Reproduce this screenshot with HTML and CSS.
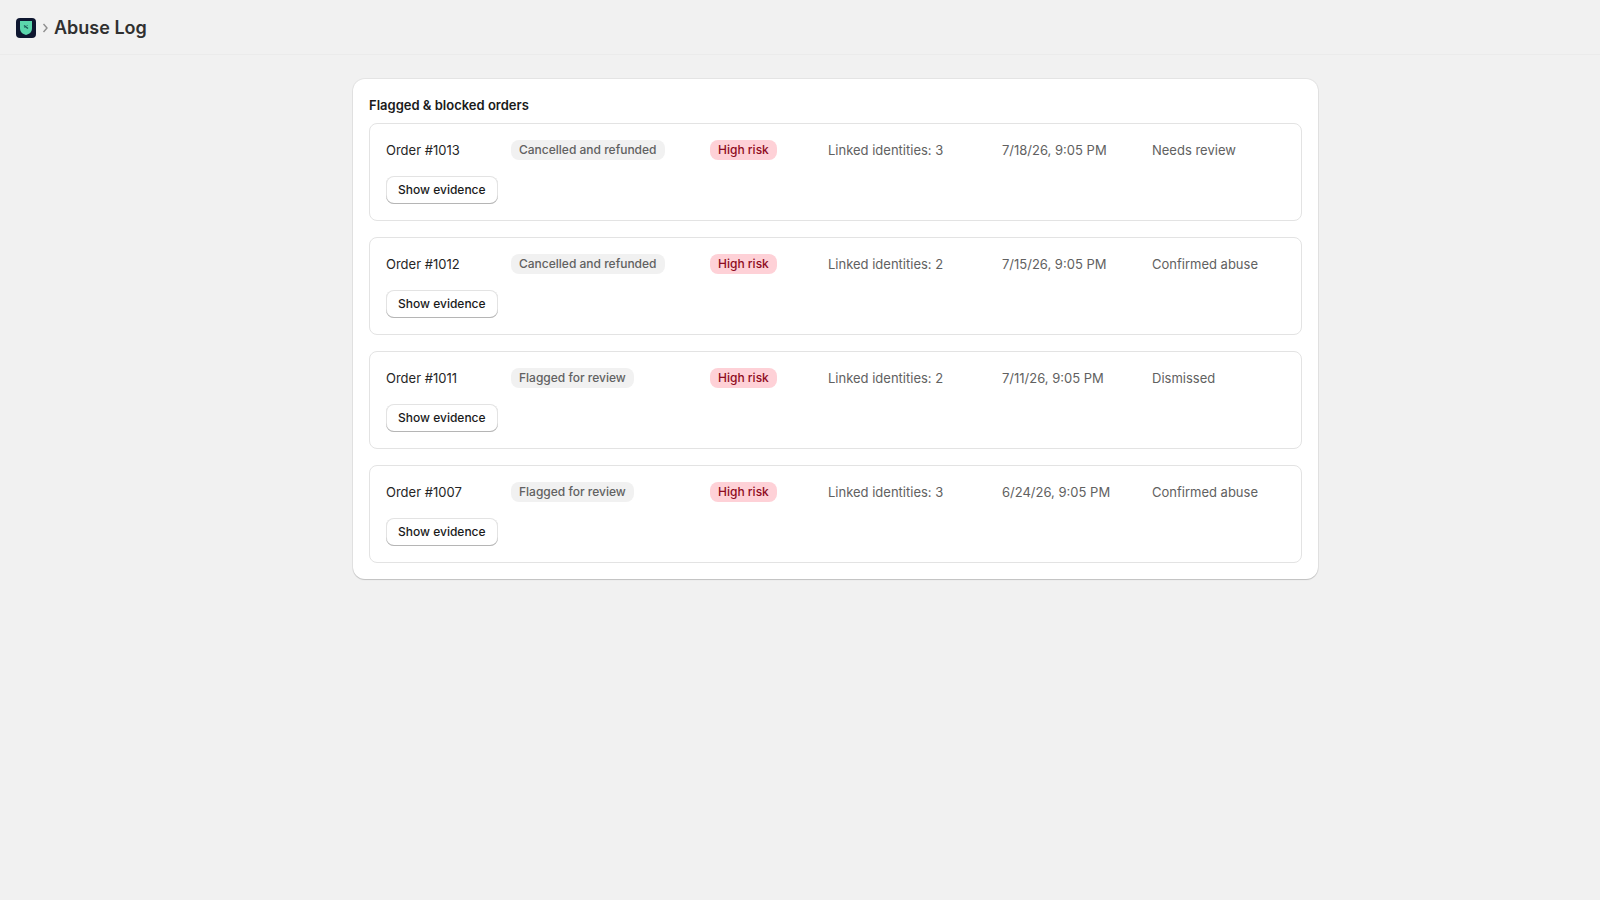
FILE: index.html
```html
<!DOCTYPE html>
<html lang="en">
<head>
<meta charset="utf-8">
<meta name="viewport" content="width=device-width, initial-scale=1">
<title>Abuse Log</title>
<link rel="stylesheet" href="styles.css">
</head>
<body>
<header class="topbar">
  <svg class="logo" viewBox="0 0 20 20" aria-hidden="true">
    <rect width="20" height="20" rx="4" fill="#0e1730"/>
    <path d="M4 3h12v7c0 4-2.500 6-6 7-3.500-1-6-3-6-7z" fill="#5bd6ac"/>
    <path d="M8 7.500l4 3" stroke="#1d5a58" stroke-width="1.500" fill="none"/>
    <path d="M8 9.500h1.500M10.500 7.500h1.500" stroke="#3a9580" stroke-width="1" fill="none"/>
  </svg>
  <svg class="chevron" viewBox="0 0 6 10" aria-hidden="true"><path d="M1.500 1L5 5 1.500 9" fill="none" stroke="#8f8f8f" stroke-width="1.400"/></svg>
  <h1 class="title">Abuse Log</h1>
</header>
<main class="page">
  <section class="card">
    <h2 class="card-title">Flagged &amp; blocked orders</h2>
    <div class="orders">
      <article class="order">
        <div class="fields">
          <span class="name">Order #1013</span>
          <span><span class="badge">Cancelled and refunded</span></span>
          <span><span class="badge critical">High risk</span></span>
          <span>Linked identities: 3</span>
          <span>7/18/26, 9:05 PM</span>
          <span>Needs review</span>
        </div>
        <button class="button" type="button">Show evidence</button>
      </article>
      <article class="order">
        <div class="fields">
          <span class="name">Order #1012</span>
          <span><span class="badge">Cancelled and refunded</span></span>
          <span><span class="badge critical">High risk</span></span>
          <span>Linked identities: 2</span>
          <span>7/15/26, 9:05 PM</span>
          <span>Confirmed abuse</span>
        </div>
        <button class="button" type="button">Show evidence</button>
      </article>
      <article class="order">
        <div class="fields">
          <span class="name">Order #1011</span>
          <span><span class="badge">Flagged for review</span></span>
          <span><span class="badge critical">High risk</span></span>
          <span>Linked identities: 2</span>
          <span>7/11/26, 9:05 PM</span>
          <span>Dismissed</span>
        </div>
        <button class="button" type="button">Show evidence</button>
      </article>
      <article class="order">
        <div class="fields">
          <span class="name">Order #1007</span>
          <span><span class="badge">Flagged for review</span></span>
          <span><span class="badge critical">High risk</span></span>
          <span>Linked identities: 3</span>
          <span>6/24/26, 9:05 PM</span>
          <span>Confirmed abuse</span>
        </div>
        <button class="button" type="button">Show evidence</button>
      </article>
    </div>
  </section>
</main>
</body>
</html>
```
FILE: styles.css
```css
* {
  box-sizing: border-box;
}

body {
  margin: 0;
  background: #f1f1f1;
  color: #1f1f1f;
  font: 400 13px/20px Inter, "Liberation Sans", sans-serif;
}

.topbar {
  display: flex;
  align-items: center;
  gap: 6px;
  padding: 16px 16px 14px;
  border-bottom: 1px solid #ebebeb;
}

.logo {
  width: 20px;
  height: 20px;
}

.chevron {
  width: 6px;
  height: 10px;
}

.title {
  margin: 0;
  font-size: 18px;
  font-weight: 600;
  line-height: 24px;
  color: #303030;
}

.page {
  padding: 24px 0 24px 71px;
}

.card {
  max-width: 965px;
  margin: 0 auto;
  padding: 16px;
  border-radius: 12px;
  background: #fff;
  box-shadow: 0 0 0 1px rgba(0, 0, 0, 0.05), 0 1px 1px rgba(0, 0, 0, 0.16);
}

.card-title {
  margin: 0 0 8px;
  font-size: 13px;
  font-weight: 600;
  line-height: 20px;
  color: #1a1a1a;
}

.orders {
  display: grid;
  gap: 16px;
}

.order {
  display: flex;
  flex-direction: column;
  align-items: flex-start;
  gap: 16px;
  padding: 16px;
  border: 1px solid #e3e3e3;
  border-radius: 8px;
}

.fields {
  display: grid;
  grid-template-columns: 125fr 199fr 118fr 174fr 150fr 133fr;
  width: 100%;
  color: #616161;
}

.name {
  color: #262626;
}

.badge {
  display: block;
  width: fit-content;
  padding: 0 8px;
  border-radius: 8px;
  background: #f1f1f1;
  color: #616161;
  font-size: 12px;
  font-weight: 550;
}

.critical {
  background: #fed1d7;
  color: #8e0b21;
}

.button {
  height: 28px;
  padding: 0 12px;
  border: 0;
  border-radius: 8px;
  background: #fff;
  box-shadow: inset 0 -1px 0 #b5b5b5, inset 0 0 0 1px #e3e3e3;
  color: #1a1a1a;
  font: 550 12px/16px Inter, "Liberation Sans", sans-serif;
}
```
